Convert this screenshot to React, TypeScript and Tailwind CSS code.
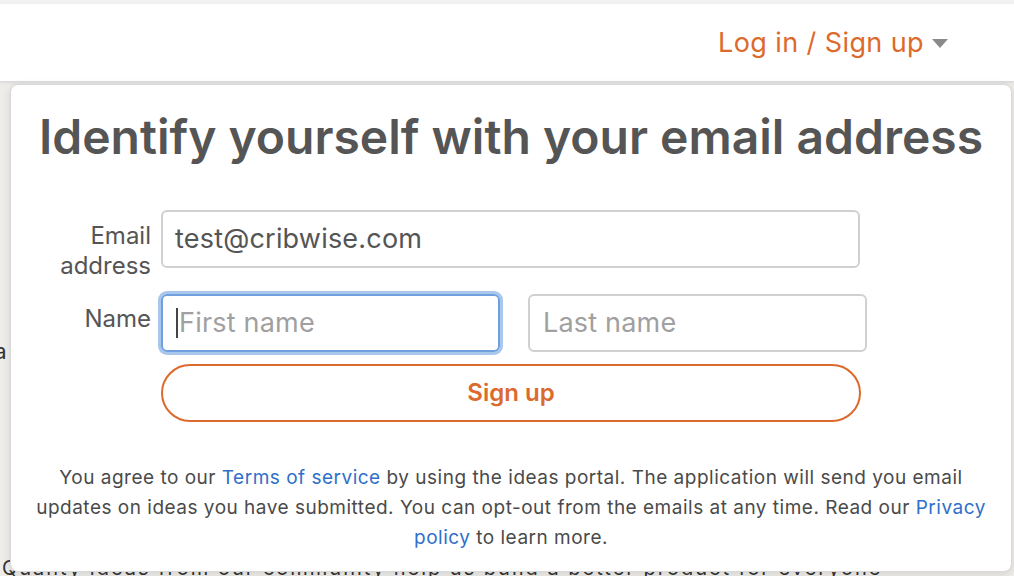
import React from "react";

export default function App() {
  const font = { fontFamily: "Inter, 'Noto Sans', sans-serif" };
  return (
    <div
      className="relative w-[1014px] h-[576px] overflow-hidden bg-[#efedea] text-[#555]"
      style={font}
    >
      <div className="h-[4px] bg-[#f2f2f2]" />
      <header className="h-[78px] bg-white flex items-center justify-end pr-[66px] border-b border-[#dcdcdc] shadow-[0_1px_3px_rgba(0,0,0,0.08)]">
        <span className="text-[27px] tracking-[0.4px] text-[#dc6a2c] leading-none">Log in / Sign up</span>
        <svg width="16" height="9" viewBox="0 0 16 9" className="ml-[8px] mt-[2px]">
          <polygon points="0,0 16,0 8,9" fill="#8a8a8a" />
        </svg>
      </header>
      <main className="flex flex-col">
        <div className="h-[258px]" />
        <p className="text-[22px] text-[#333] -ml-[14px] leading-none">ra</p>
        <div className="h-[196px]" />
        <p className="text-[20px] text-[#333] leading-none pl-[2px] tracking-[2px]">
          Quality ideas from our community help us build a better product for everyone
        </p>
      </main>

      <div className="absolute left-[10px] top-[84px] w-[1002px] h-[488px] bg-white rounded-[8px] border border-[#d9d9d9] shadow-[0_2px_8px_rgba(0,0,0,0.12)] flex flex-col items-center">
        <h1 className="mt-[24px] text-[48px] font-semibold leading-[56px] text-[#555]">
          Identify yourself with your email address
        </h1>

        <div className="mt-[45px] w-full flex flex-col">
          <div className="flex items-start h-[58px]">
            <label className="w-[140px] text-right text-[24px] leading-[30px] text-[#555] pt-[11px]">
              Email address
            </label>
            <div className="ml-[10px] w-[699px] h-[58px] rounded-[6px] border-2 border-[#d0d0d0] flex items-center px-[12px] text-[27px] tracking-[0.2px] text-[#555]">
              test@cribwise.com
            </div>
          </div>

          <div className="flex items-start mt-[26px] h-[58px]">
            <label className="w-[140px] text-right text-[24px] leading-[30px] text-[#555] pt-[10px]">
              Name
            </label>
            <div className="ml-[10px] w-[339px] h-[58px] rounded-[6px] border-2 border-[#6f9fdc] ring-[3px] ring-[#a9c6ec] flex items-center px-[13px] text-[27px] tracking-[0.2px] text-[#a0a0a0]">
              <span className="w-[2px] h-[30px] bg-[#444] mr-[1px]" />
              First name
            </div>
            <div className="ml-[28px] w-[339px] h-[58px] rounded-[6px] border-2 border-[#d0d0d0] flex items-center px-[13px] text-[27px] tracking-[0.2px] text-[#a0a0a0]">
              Last name
            </div>
          </div>

          <div className="ml-[150px] mt-[12px] w-[700px] h-[58px] rounded-full border-2 border-[#dc6a2c] flex items-center justify-center text-[24px] font-semibold text-[#dc6a2c]">
            Sign up
          </div>
        </div>

        <p className="mt-[41px] w-[954px] text-center text-[19px] tracking-[0.5px] leading-[30px] text-[#4a4a4a]">
          You agree to our <span className="text-[#2f6fcb]">Terms of service</span> by using the ideas portal. The application will send you email updates on ideas you have submitted. You can opt-out from the emails at any time. Read our <span className="text-[#2f6fcb]">Privacy policy</span> to learn more.
        </p>
      </div>
    </div>
  );
}
